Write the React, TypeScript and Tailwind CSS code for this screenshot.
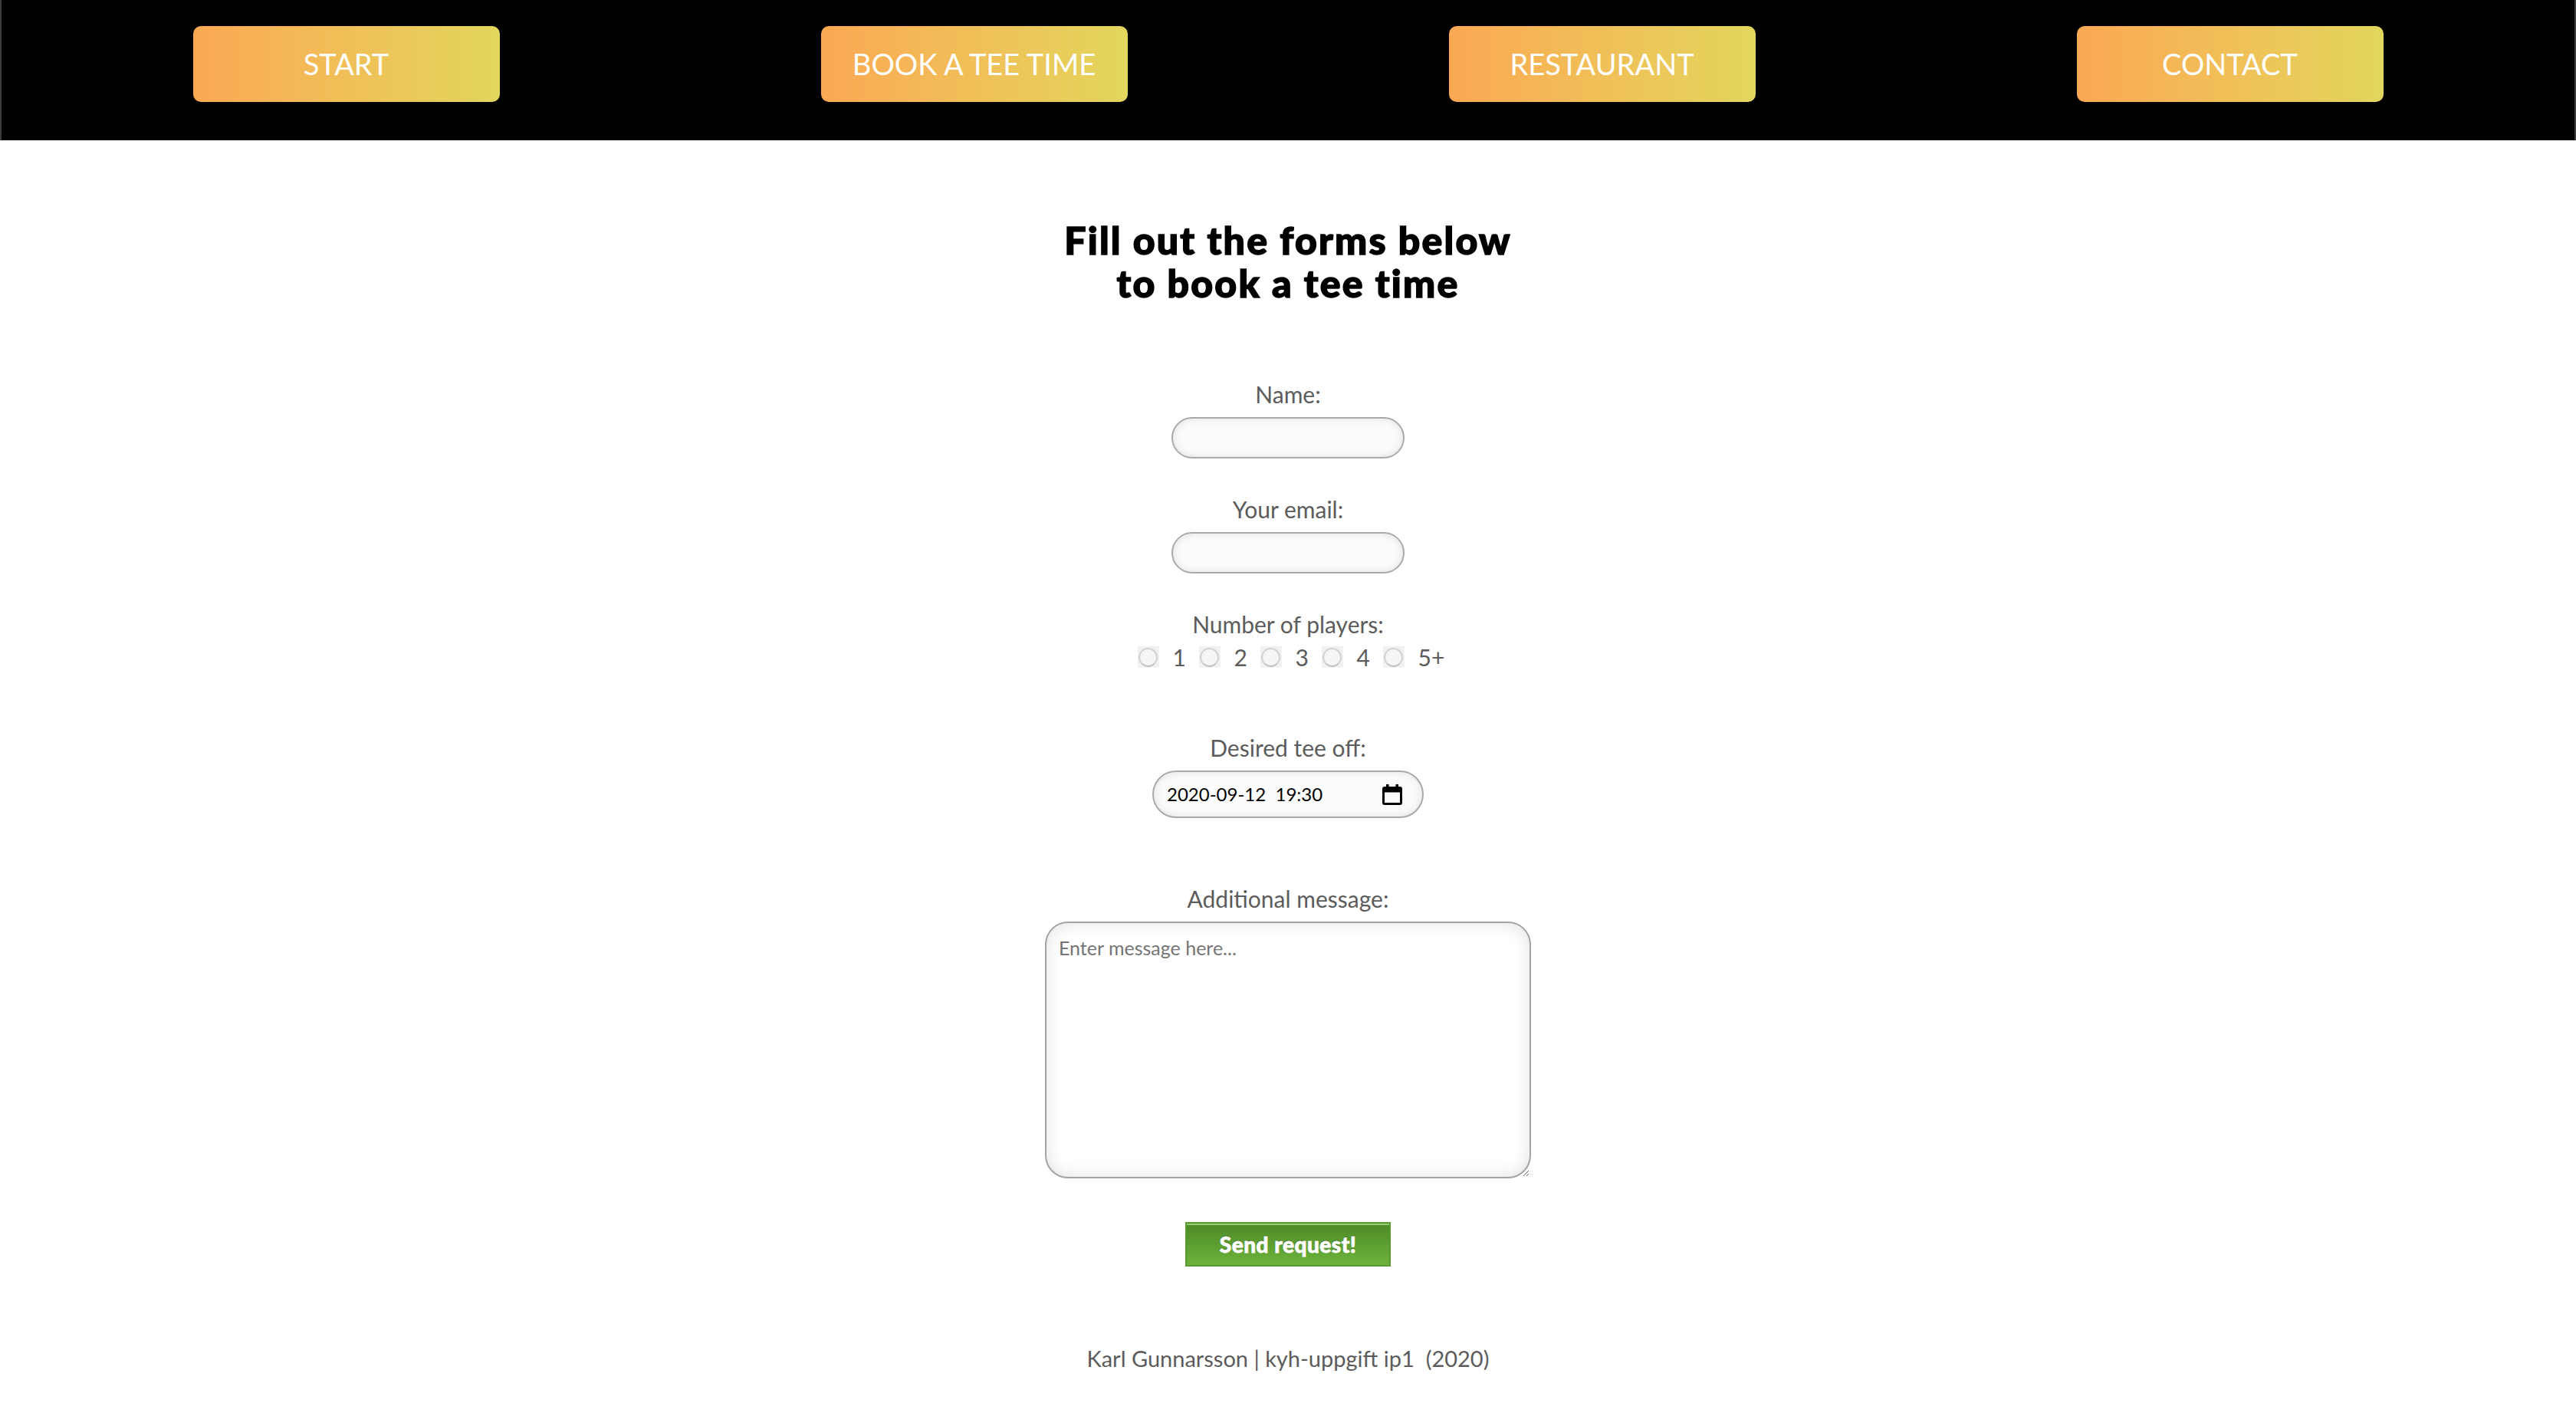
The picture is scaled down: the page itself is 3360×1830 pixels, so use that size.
const navItems = ['START', 'BOOK A TEE TIME', 'RESTAURANT', 'CONTACT'];
const players = ['1', '2', '3', '4', '5+'];

function CalendarIcon() {
  return (
    <svg width="26" height="27" viewBox="0 0 26 27" fill="none">
      <rect x="1.5" y="4.5" width="23" height="21" rx="1.5" stroke="black" strokeWidth="3" />
      <rect x="1.5" y="4.5" width="23" height="6" fill="black" />
      <rect x="5" y="0" width="3.5" height="5" fill="black" />
      <rect x="17.5" y="0" width="3.5" height="5" fill="black" />
    </svg>
  );
}

export default function App() {
  return (
    <div className="min-h-[1830px] bg-white font-['Lato',sans-serif]">
      <nav className="grid grid-cols-4 border-x-2 border-[#3d3d3d] bg-black px-10 pt-[34px] pb-[50px]">
        {navItems.map((item) => (
          <a
            key={item}
            href="#"
            className="mx-auto flex h-[99px] w-[400px] items-center justify-center rounded-[10px] bg-linear-to-r from-[#fba853] to-[#e2d65d] text-[38px] text-white"
          >
            {item}
          </a>
        ))}
      </nav>

      <main className="flex flex-col items-center">
        <h1 className="mt-[102px] text-center text-[50px] leading-[56px] font-black tracking-[2.2px] text-black [-webkit-text-stroke:1.5px_black]">
          Fill out the forms below
          <br />
          to book a tee time
        </h1>

        <form className="mt-[97px] flex flex-col items-center text-[#5c5c5c]">
          <label htmlFor="name" className="text-[30px] leading-[40px]">
            Name:
          </label>
          <input
            id="name"
            type="text"
            className="mt-[10px] h-[54px] w-[304px] rounded-full border-2 border-[#a9a9a9] bg-[#fbfbfb] px-5 text-[26px] shadow-[inset_0_0_12px_rgba(0,0,0,0.1)] outline-none"
          />

          <label htmlFor="email" className="mt-[46px] text-[30px] leading-[40px]">
            Your email:
          </label>
          <input
            id="email"
            type="email"
            className="mt-[10px] h-[54px] w-[304px] rounded-full border-2 border-[#a9a9a9] bg-[#fbfbfb] px-5 text-[26px] shadow-[inset_0_0_12px_rgba(0,0,0,0.1)] outline-none"
          />

          <span className="mt-[46px] text-[30px] leading-[40px]">Number of players:</span>
          <div className="mt-[9px] ml-[8px] flex h-[28px] items-center">
            {players.map((p, i) => (
              <label key={p} className={`flex items-center ${i < players.length - 1 ? 'w-[80px]' : ''}`}>
                <span className="flex h-[28px] w-[28px] items-center justify-center bg-[#f1f1f1]">
                  <input
                    type="radio"
                    name="players"
                    value={p}
                    className="h-[25px] w-[25px] appearance-none rounded-full border-2 border-[#d2d2d2] border-b-[#c2c2c2] bg-[#f5f5f5]"
                  />
                </span>
                <span className="ml-[18px] text-[30px] leading-[40px]">{p}</span>
              </label>
            ))}
          </div>

          <span className="mt-[84px] text-[30px] leading-[40px]">Desired tee off:</span>
          <div className="mt-[10px] flex h-[62px] w-[354px] items-center justify-between rounded-full border-2 border-[#a9a9a9] bg-[#fbfbfb] pr-[26px] pl-[17px] shadow-[inset_0_0_12px_rgba(0,0,0,0.1)]">
            <span className="text-[24px] text-black">2020-09-12&nbsp; 19:30</span>
            <CalendarIcon />
          </div>

          <label htmlFor="message" className="mt-[85px] text-[30px] leading-[40px]">
            Additional message:
          </label>
          <textarea
            id="message"
            placeholder="Enter message here..."
            className="mt-[10px] h-[335px] w-[634px] rounded-[30px] border-2 border-[#a3a3a3] bg-white px-[16px] pt-[14px] text-[25px] text-black shadow-[inset_0_0_22px_rgba(0,0,0,0.12)] outline-none placeholder:text-[#757575]"
          />

          <button
            type="button"
            className="mt-[57px] h-[58px] w-[268px] border-2 border-[#5a9833] bg-linear-to-b from-[#4d8b26] to-[#6db23c] text-[28px] font-black tracking-[0.5px] text-white shadow-[inset_0_2px_0_#93cc73] [-webkit-text-stroke:0.8px_white] [text-shadow:0_-1px_1px_rgba(0,0,0,0.45)]"
          >
            Send request!
          </button>
        </form>

        <footer className="mt-[100px] text-[29px] leading-[40px] text-[#5c5c5c]">
          Karl Gunnarsson | kyh-uppgift ip1&nbsp; (2020)
        </footer>
      </main>
    </div>
  );
}
